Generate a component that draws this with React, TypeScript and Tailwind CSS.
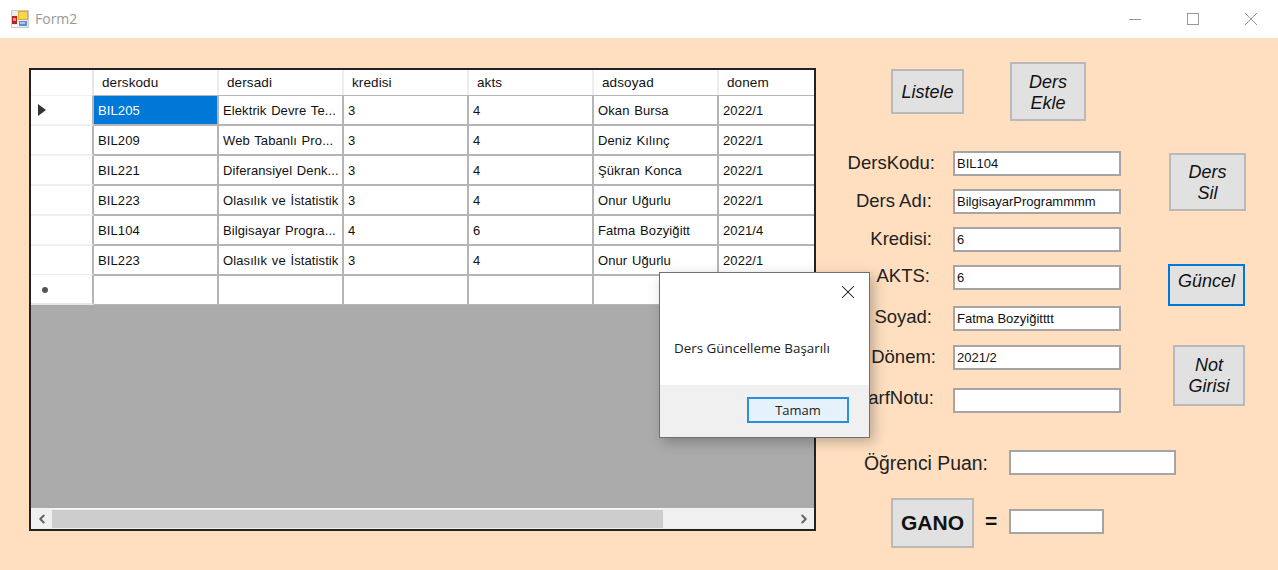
import { ChevronLeft, ChevronRight, X } from "lucide-react"

const columns = ["derskodu", "dersadi", "kredisi", "akts", "adsoyad", "donem"]

const rows = [
  ["BIL205", "Elektrik Devre Te...", "3", "4", "Okan Bursa", "2022/1"],
  ["BIL209", "Web Tabanlı Pro...", "3", "4", "Deniz Kılınç", "2022/1"],
  ["BIL221", "Diferansiyel Denk...", "3", "4", "Şükran Konca", "2022/1"],
  ["BIL223", "Olasılık ve İstatistik", "3", "4", "Onur Uğurlu", "2022/1"],
  ["BIL104", "Bilgisayar Progra...", "4", "6", "Fatma Bozyiğitt", "2021/4"],
  ["BIL223", "Olasılık ve İstatistik", "3", "4", "Onur Uğurlu", "2022/1"],
]

const fields = [
  { label: "DersKodu:", value: "BIL104", labelClass: "pr-[18px] -translate-y-[1px]", rowClass: "mt-[30px]" },
  { label: "Ders Adı:", value: "BilgisayarProgrammmm", labelClass: "pr-[21px] -translate-y-[1px]", rowClass: "mt-[13px]" },
  { label: "Kredisi:", value: "6", labelClass: "pr-[21px] -translate-y-[1px]", rowClass: "mt-[13px]" },
  { label: "AKTS:", value: "6", labelClass: "pr-[23px] -translate-y-[2px]", rowClass: "mt-[13px]" },
  { label: "Ad Soyad:", value: "Fatma Bozyiğitttt", labelClass: "pr-[21px] -translate-y-[2px]", rowClass: "mt-[16px]" },
  { label: "Dönem:", value: "2021/2", labelClass: "pr-[17px] -translate-y-[1px]", rowClass: "mt-[14px]" },
  { label: "HarfNotu:", value: "", labelClass: "pr-[19px] -translate-y-[3px]", rowClass: "mt-[18px]" },
]

function FormIcon() {
  return (
    <svg width="18" height="18" viewBox="0 0 18 18" className="shrink-0">
      <rect x="0" y="0" width="18" height="18" fill="#c9c9c9" />
      <rect x="1" y="1" width="16" height="16" fill="#ececec" />
      <rect x="7" y="1" width="10" height="9" fill="#e2ac14" />
      <rect x="8" y="2" width="8" height="7" fill="#f9d65a" />
      <rect x="1" y="6" width="5" height="8" fill="#b52424" />
      <rect x="2" y="8" width="3" height="3" fill="#ee8888" />
      <rect x="8" y="11" width="8" height="5" fill="#5d8bd6" />
      <rect x="9" y="12" width="5" height="2" fill="#a8c6f0" />
      <rect x="1" y="15" width="2" height="2" fill="#ffffff" />
      <rect x="4" y="15" width="2" height="2" fill="#ffffff" />
    </svg>
  )
}

function FormButton({ children, className }: { children: React.ReactNode; className: string }) {
  return (
    <button className={`flex shrink-0 items-center justify-center bg-[#e1e1e1] border-2 text-[18px] leading-[21px] italic text-[#111] text-center ${className}`}>
      {children}
    </button>
  )
}

function TextBox({ value, className }: { value: string; className: string }) {
  return (
    <div className={`h-[25px] shrink-0 bg-white border-2 border-[#a5a5a5] pl-[2px] text-[13px] leading-[21px] text-[#111] ${className}`}>
      {value}
    </div>
  )
}

function DataGrid() {
  return (
    <div className="flex h-[463px] w-[787px] shrink-0 flex-col border-2 border-[#222] bg-[#ababab] text-[13px] tracking-[0.1px] [word-spacing:1px] text-[#111]">
      {/* header */}
      <div className="flex h-[25px] shrink-0 bg-white">
        <div className="w-[63px] shrink-0 border-r-2 border-[#e6e6e6]" />
        {columns.map((c, i) => (
          <div
            key={c}
            className={`flex items-center pl-[8px] pt-[1px] text-[13.5px] ${i === 5 ? "w-[95px]" : "w-[125px] border-r-2 border-[#ededed]"}`}
          >
            {c}
          </div>
        ))}
      </div>

      {rows.map((row, r) => (
        <div key={r} className="flex h-[30px] shrink-0 bg-white">
          <div className="flex w-[63px] shrink-0 items-center border-y border-y-[#efefef] border-r-2 border-r-[#b5b5b5] pl-[7px]">
            {r === 0 && <div className="h-0 w-0 border-y-[6px] border-l-[8px] border-y-transparent border-l-[#333]" />}
          </div>
          {row.map((cell, i) => (
            <div
              key={i}
              className={`flex items-center whitespace-nowrap overflow-hidden border-y border-[#b5b5b5] pl-[4px] pt-[1px] ${i === 5 ? "w-[95px]" : "w-[125px] border-r-2"} ${r === 0 && i === 0 ? "bg-[#0078d7] text-white" : ""}`}
            >
              {cell}
            </div>
          ))}
        </div>
      ))}

      {/* new row */}
      <div className="flex h-[30px] shrink-0 bg-white">
        <div className="flex w-[63px] shrink-0 items-center border-b-2 border-b-[#e6e6e6] border-r-2 border-r-[#b5b5b5] pl-[11px]">
          <div className="mt-[2px] h-[6px] w-[6px] rounded-full bg-[#555]" />
        </div>
        {columns.map((c, i) => (
          <div key={c} className={`border-y border-[#b5b5b5] ${i === 5 ? "w-[95px]" : "w-[125px] border-r-2"}`} />
        ))}
      </div>

      <div className="flex-1" />

      {/* horizontal scrollbar */}
      <div className="flex h-[21px] shrink-0 items-center border-t border-[#f5f5f5] bg-[#f0f0f0] text-[#666]">
        <div className="flex w-[21px] justify-center">
          <ChevronLeft size={14} strokeWidth={3.5} />
        </div>
        <div className="h-[18px] w-[611px] bg-[#cdcdcd]" />
        <div className="flex-1" />
        <div className="flex w-[21px] justify-center">
          <ChevronRight size={14} strokeWidth={3.5} />
        </div>
      </div>
    </div>
  )
}

export default function App() {
  return (
    <div className="relative flex h-[570px] w-[1278px] flex-col overflow-hidden bg-[#ffdfc0] font-['Liberation_Sans',Arial,sans-serif]">
      {/* title bar */}
      <div className="flex h-[38px] shrink-0 items-center bg-white pl-[11px]">
        <FormIcon />
        <span className="ml-[6px] -mt-[2px] font-['Open_Sans',sans-serif] text-[14px] text-[#999]">Form2</span>
        <div className="ml-auto flex items-center pr-[21px]">
          <div className="h-px w-[12px] bg-[#999]" />
          <div className="ml-[46px] h-[12px] w-[12px] border border-[#999]" />
          <svg width="12" height="12" viewBox="0 0 12 12" className="ml-[46px]">
            <path d="M0 0 L12 12 M12 0 L0 12" stroke="#999" strokeWidth="1" />
          </svg>
        </div>
      </div>

      <div className="flex flex-1 pl-[29px] pt-[30px]">
        <DataGrid />

        {/* right panel */}
        <div className="-mt-[6px] flex flex-1 flex-col">
          <div className="flex items-start pl-[75px]">
            <FormButton className="mt-[7px] h-[45px] w-[73px] border-[#b9b9b9] pt-[1px]">Listele</FormButton>
            <FormButton className="ml-[46px] h-[59px] w-[76px] border-[#b9b9b9] pt-[2px]">Ders<br />Ekle</FormButton>
          </div>

          <div className="flex">
            <div className="flex flex-col">
              {fields.map((f) => (
                <div key={f.label} className={`flex items-center ${f.rowClass}`}>
                  <div className={`w-[137px] whitespace-nowrap text-right text-[18.5px] leading-[22px] text-[#222] ${f.labelClass}`}>
                    {f.label}
                  </div>
                  <TextBox value={f.value} className="w-[168px]" />
                </div>
              ))}
            </div>

            <div className="flex flex-col items-start">
              <FormButton className="ml-[48px] mt-[32px] h-[58px] w-[77px] border-[#b9b9b9] pt-[2px]">Ders<br />Sil</FormButton>
              <FormButton className="ml-[47px] mt-[53px] h-[42px] w-[77px] border-[#0078d7] pb-[8px]">Güncel</FormButton>
              <FormButton className="ml-[52px] mt-[39px] h-[61px] w-[72px] border-[#b9b9b9]">Not<br />Girisi</FormButton>
            </div>
          </div>

          <div className="mt-[37px] flex items-center pl-[48px]">
            <span className="w-[145px] whitespace-nowrap text-[19.4px] leading-[22px] text-[#222]">Öğrenci Puan:</span>
            <TextBox value="" className="w-[167px]" />
          </div>

          <div className="mt-[23px] flex items-center pl-[75px]">
            <FormButton className="h-[50px] w-[83px] border-[#b9b9b9] pb-[1px] !text-[21px] font-bold !not-italic">GANO</FormButton>
            <span className="ml-[11px] -mt-[4px] w-[24px] text-[21px] font-bold text-[#111]">=</span>
            <TextBox value="" className="mt-[-4px] w-[95px]" />
          </div>
        </div>
      </div>

      {/* message box */}
      <div className="absolute left-[659px] top-[272px] flex h-[166px] w-[211px] flex-col border border-[#6f6f6f] bg-white shadow-[4px_4px_12px_rgba(0,0,0,0.25)]">
        <div className="flex h-[112px] flex-col">
          <div className="flex justify-end pr-[10px] pt-[8px] text-[#111]">
            <X size={22} strokeWidth={1.1} />
          </div>
          <div className="mt-[36px] pl-[14px] font-['Open_Sans',sans-serif] text-[13.4px] leading-[18px] text-[#222]">Ders Güncelleme Başarılı</div>
        </div>
        <div className="flex flex-1 justify-end bg-[#f0f0f0] pr-[20px] pt-[12px]">
          <div className="flex h-[26px] w-[102px] items-center justify-center border-2 border-[#2a8fdc] bg-[#e5f1fb] pt-[2px] font-['Open_Sans',sans-serif] text-[13px] font-medium text-[#222]">
            Tamam
          </div>
        </div>
      </div>
    </div>
  )
}
